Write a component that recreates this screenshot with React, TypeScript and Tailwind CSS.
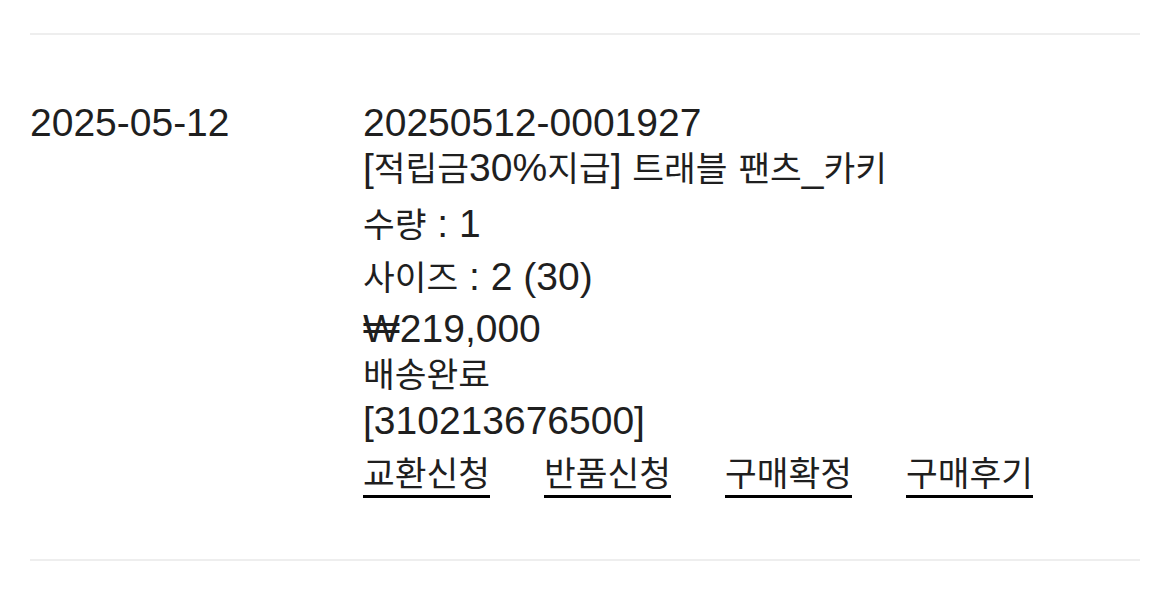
import React from "react";

function K({ text }: { text: string }) {
  const parts = text.split(/([\uAC00-\uD7A3]+)/);
  return (
    <>
      {parts.map((p, i) =>
        /[\uAC00-\uD7A3]/.test(p) ? (
          <span key={i} className="font-['Noto_Sans_CJK_KR',sans-serif] text-[34.5px] leading-none">
            {p}
          </span>
        ) : (
          <React.Fragment key={i}>{p}</React.Fragment>
        )
      )}
    </>
  );
}

export default function App() {
  const actions = ["교환신청", "반품신청", "구매확정", "구매후기"];
  return (
    <div className="w-[1170px] h-[599px] bg-white px-[30px] pt-[33px] text-[#1f1f1f] font-['Liberation_Sans','Noto_Sans_CJK_KR',sans-serif] text-[39px] leading-[45px]">
      <div className="border-t-2 border-[#eeeeee]" />
      <div className="flex pt-[65px] pb-[61px]">
        <div className="w-[333px] shrink-0">2025-05-12</div>
        <div className="flex flex-col">
          <div>20250512-0001927</div>
          <div>
            <K text="[적립금30%지급] 트래블 팬츠_카키" />
          </div>
          <div className="mt-[11px]">
            <K text="수량 : 1" />
          </div>
          <div className="mt-[8px]">
            <K text="사이즈 : 2 (30)" />
          </div>
          <div className="mt-[7px]">₩219,000</div>
          <div>
            <K text="배송완료" />
          </div>
          <div className="mt-[2px]">[310213676500]</div>
          <div className="mt-[7px] flex gap-[54px]">
            {actions.map((a) => (
              <span key={a} className="block border-b-[3px] border-black">
                <K text={a} />
              </span>
            ))}
          </div>
        </div>
      </div>
      <div className="border-t-2 border-[#eeeeee]" />
    </div>
  );
}
